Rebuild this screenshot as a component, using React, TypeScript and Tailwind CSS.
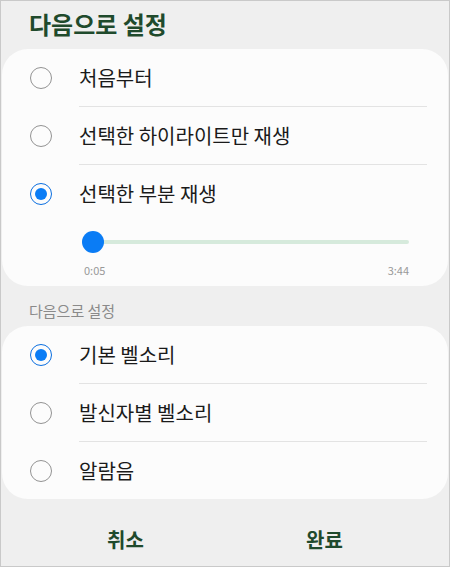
const font = { fontFamily: '"Noto Sans CJK KR", "Noto Sans", sans-serif' }

function Radio({ checked }: { checked?: boolean }) {
  return checked ? (
    <span className="flex h-[22px] w-[22px] shrink-0 items-center justify-center rounded-full border-[1.5px] border-[#0b6fe0]">
      <span className="h-[12px] w-[12px] rounded-full bg-[#0a7cf5]" />
    </span>
  ) : (
    <span className="h-[22px] w-[22px] shrink-0 rounded-full border-[1.5px] border-[#939393]" />
  )
}

function Row({ label, checked, last }: { label: string; checked?: boolean; last?: boolean }) {
  return (
    <>
      <div className="flex h-[57px] items-center pl-[28px]">
        <Radio checked={checked} />
        <span className="ml-[27px] text-[20px] text-[#1a1a1a]">{label}</span>
      </div>
      {!last && <div className="ml-[77px] mr-[21px] h-px bg-[#e3e3e3]" />}
    </>
  )
}

export default function App() {
  return (
    <div
      className="flex h-[567px] w-[450px] flex-col border border-[#c9c9c9] bg-[#efefef] px-px"
      style={font}
    >
      <div className="mt-[7px] h-[32px] pl-[27px] text-[24px] font-bold leading-[32px] text-[#1f4a2c]">
        다음으로 설정
      </div>
      <div className="mt-[9px] rounded-[26px] bg-[#fcfcfc]">
        <Row label="처음부터" />
        <Row label="선택한 하이라이트만 재생" />
        <Row label="선택한 부분 재생" checked last />
        <div className="ml-[80px] mr-[39px] pb-[9px] pt-[9px]">
          <div className="relative flex h-[22px] items-center">
            <div className="ml-[11px] h-[4px] flex-1 rounded-full bg-[#d6eadc]" />
            <span className="absolute left-0 top-0 h-[22px] w-[22px] rounded-full bg-[#0a7cf5]" />
          </div>
          <div className="mt-[10px] flex justify-between pl-[2px] text-[11px] leading-[14px] text-[#999]">
            <span>0:05</span>
            <span>3:44</span>
          </div>
        </div>
      </div>
      <div className="mt-[15px] h-[20px] pl-[27px] text-[15px] leading-[20px] text-[#8a8a8a]">
        다음으로 설정
      </div>
      <div className="mt-[5px] rounded-[26px] bg-[#fcfcfc]">
        <Row label="기본 벨소리" checked />
        <Row label="발신자별 벨소리" />
        <Row label="알람음" last />
      </div>
      <div className="flex flex-1 items-center px-[24px] pt-[14px]">
        <button className="flex-1 text-[20px] font-bold text-[#1f4a2c]">취소</button>
        <button className="flex-1 text-[20px] font-bold text-[#1f4a2c]">완료</button>
      </div>
    </div>
  )
}
